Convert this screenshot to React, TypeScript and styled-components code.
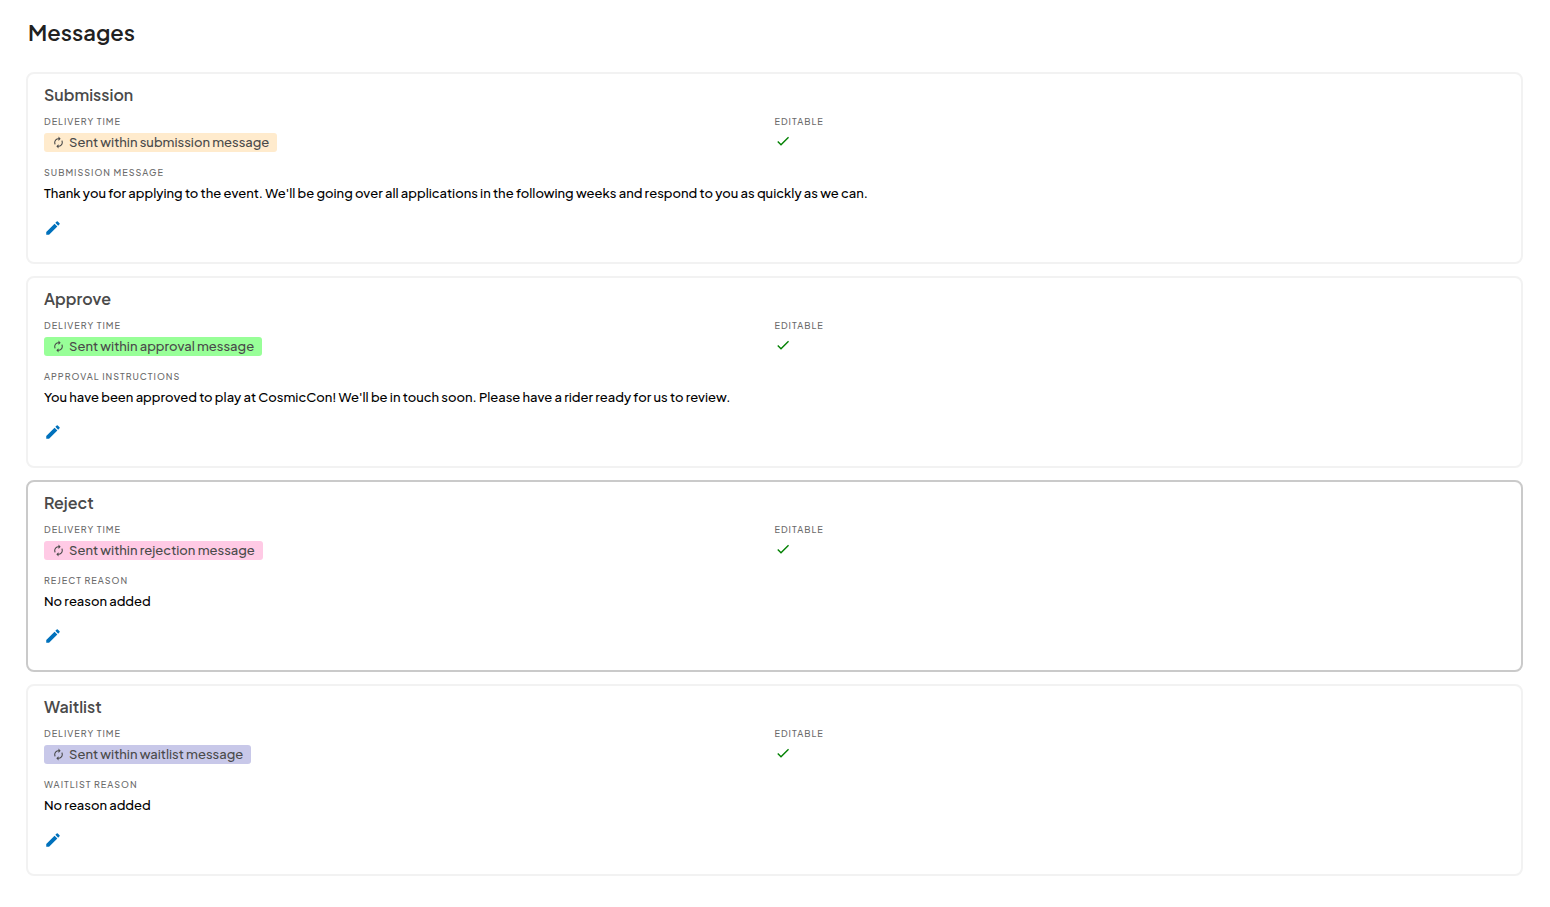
import React from "react";
import styled, { createGlobalStyle } from "styled-components";
import { MdAutorenew, MdCheck, MdEdit } from "react-icons/md";

const GlobalStyle = createGlobalStyle`
  *, *::before, *::after { box-sizing: border-box; }
  body {
    margin: 0;
    background: #fff;
    color: #000;
    font-family: "Plus Jakarta Sans", Inter, "Liberation Sans", sans-serif;
    font-size: 13px;
    font-weight: 500;
    line-height: 18px;
  }
`;

const Page = styled.main`
  padding: 18px 27px 32px 26px;
`;

const PageTitle = styled.h1`
  margin: 0 0 26px 2px;
  font-size: 22px;
  line-height: 28px;
  font-weight: 600;
  color: #212121;
`;

const CardList = styled.div`
  display: flex;
  flex-direction: column;
  gap: 12px;
`;

const Card = styled.section<{ $active?: boolean }>`
  padding: 10px 16px 25px;
  border: 2px solid ${({ $active }) => ($active ? "#cacaca" : "#f2f2f2")};
  border-radius: 8px;
`;

const CardTitle = styled.h2`
  margin: 0 0 10px;
  font-size: 16px;
  line-height: 22px;
  font-weight: 600;
  color: #4a4a4a;
`;

const Columns = styled.div`
  display: grid;
  grid-template-columns: 1fr 1fr;
  margin-bottom: 15px;
`;

const FieldLabel = styled.div`
  margin-bottom: 5px;
  font-size: 9px;
  line-height: 12px;
  letter-spacing: 1px;
  text-transform: uppercase;
  color: #6b6b6b;
`;

const Badge = styled.span<{ $color: string }>`
  display: inline-flex;
  align-items: center;
  gap: 4px;
  height: 19px;
  padding: 0 8px 1px;
  border-radius: 3px;
  background: ${({ $color }) => $color};
  color: #4a4a4a;
  vertical-align: top;
`;

const Check = styled(MdCheck)`
  display: block;
  color: #008000;
`;

const Message = styled.p`
  margin: 0 0 17px;
`;

const EditButton = styled.button`
  display: block;
  padding: 0;
  border: 0;
  background: none;
  color: #0071bc;
  cursor: pointer;

  svg { display: block; }
`;

const messages = [
  {
    title: "Submission",
    delivery: "Sent within submission message",
    color: "#ffebcd",
    label: "Submission message",
    text: "Thank you for applying to the event. We'll be going over all applications in the following weeks and respond to you as quickly as we can.",
  },
  {
    title: "Approve",
    delivery: "Sent within approval message",
    color: "#98ff98",
    label: "Approval instructions",
    text: "You have been approved to play at CosmicCon! We'll be in touch soon. Please have a rider ready for us to review.",
  },
  {
    title: "Reject",
    delivery: "Sent within rejection message",
    color: "#ffcae5",
    label: "Reject reason",
    text: "No reason added",
    active: true,
  },
  {
    title: "Waitlist",
    delivery: "Sent within waitlist message",
    color: "#c8c8e9",
    label: "Waitlist reason",
    text: "No reason added",
  },
];

export default function App() {
  return (
    <>
      <GlobalStyle />
      <Page>
        <PageTitle>Messages</PageTitle>
        <CardList>
          {messages.map((m) => (
            <Card key={m.title} $active={m.active}>
              <CardTitle>{m.title}</CardTitle>
              <Columns>
                <div>
                  <FieldLabel>Delivery time</FieldLabel>
                  <Badge $color={m.color}>
                    <MdAutorenew size={13} />
                    {m.delivery}
                  </Badge>
                </div>
                <div>
                  <FieldLabel>Editable</FieldLabel>
                  <Check size={16} />
                </div>
              </Columns>
              <FieldLabel>{m.label}</FieldLabel>
              <Message>{m.text}</Message>
              <EditButton type="button" aria-label={`Edit ${m.title}`}>
                <MdEdit size={18} />
              </EditButton>
            </Card>
          ))}
        </CardList>
      </Page>
    </>
  );
}
